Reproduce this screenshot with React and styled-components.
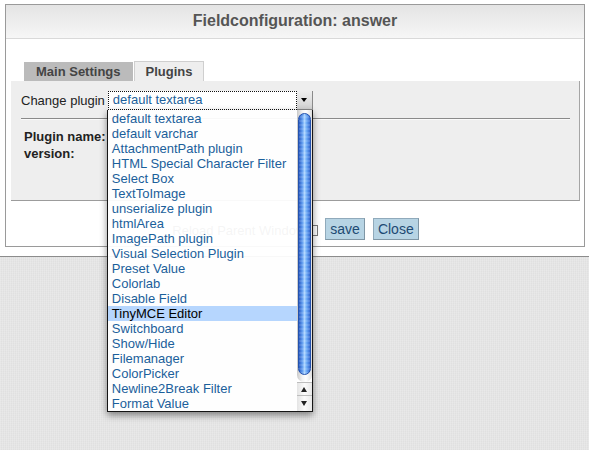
import React from 'react';
import styled, { createGlobalStyle } from 'styled-components';

const GlobalStyle = createGlobalStyle`
    html, body {
        margin: 0;
        padding: 0;
    }
    body {
        font-family: "Liberation Sans", Arial, sans-serif;
        background: #e4e4e4;
    }
    * {
        box-sizing: border-box;
    }
`

const Page = styled.div`
    width: 589px;
    height: 450px;
    display: flex;
    flex-direction: column;
    overflow: hidden;
`

const TopArea = styled.div`
    height: 257px;
    background: #fff;
    border-bottom: 1px solid #8c8c8c;
    padding: 4px 4px 0 5px;
    flex-shrink: 0;
`

const Bottom = styled.div`
    flex: 1;
    background-color: #e4e4e4;
    background-image:
        repeating-linear-gradient(90deg, rgba(255,255,255,0.18) 0 1px, transparent 1px 2px),
        repeating-linear-gradient(0deg, rgba(0,0,0,0.015) 0 1px, transparent 1px 2px);
`

const Window = styled.div`
    height: 243px;
    border: 1px solid #9a9a9a;
    display: flex;
    flex-direction: column;
`

const Header = styled.div`
    height: 34px;
    border-bottom: 1px solid #d9d9d9;
    background: linear-gradient(#e4e4e4, #f6f6f6);
    display: flex;
    align-items: center;
    justify-content: center;
    padding-bottom: 1px;
`

const Title = styled.h1`
    margin: 0;
    font-size: 16px;
    font-weight: bold;
    color: #555;
`

const Body = styled.div`
    flex: 1;
    padding: 22px 4px 0 5px;
    display: flex;
    flex-direction: column;
`

const Tabs = styled.div`
    display: flex;
    align-items: flex-end;
    padding-left: 13px;
`

const Tab = styled.div`
    height: ${p => (p.$active ? '20px' : '19px')};
    padding: 0 ${p => (p.$active ? '11px' : '12px')};
    margin-right: 1px;
    display: flex;
    align-items: center;
    font-size: 13px;
    font-weight: bold;
    color: #444;
    background: ${p => (p.$active ? '#eeeeee' : '#bbbbbb')};
    border: ${p => (p.$active ? '1px solid #cfcfcf' : 'none')};
    border-bottom: none;
`

const Panel = styled.div`
    height: 120px;
    background: #eeeeee;
    border-right: 1px solid #a5a5a5;
    border-bottom: 1px solid #9c9c9c;
    padding: 10px 0 0 10px;
    flex-shrink: 0;
`

const PluginRow = styled.div`
    display: flex;
    align-items: center;
    height: 19px;
`

const RowLabel = styled.span`
    font-size: 13px;
    color: #222;
    margin-right: 3px;
`

const SelectWrap = styled.div`
    position: relative;
    width: 205px;
    height: 19px;
    display: flex;
`

const SelectValue = styled.div`
    flex: 1;
    border: 1px dotted #111;
    background: #fff;
    font-size: 13px;
    color: #1b5f9b;
    padding-left: 4px;
    line-height: 16px;
`

const SelectArrow = styled.div`
    width: 16px;
    background: linear-gradient(#eeeeee, #d2d2d2);
    border-right: 1px solid #8a8a8a;
    border-bottom: 1px solid #8a8a8a;
    display: flex;
    align-items: center;
    justify-content: center;

    &::after {
        content: '';
        border-left: 3px solid transparent;
        border-right: 3px solid transparent;
        border-top: 4px solid #000;
    }
`

const Dropdown = styled.div`
    position: absolute;
    top: 19px;
    left: -1px;
    width: 206px;
    height: 302px;
    display: flex;
    border: 1px solid #151515;
    border-top: none;
    background: rgba(255, 255, 255, 0.94);
    box-shadow: 0 3px 7px rgba(0, 0, 0, 0.45);
    z-index: 5;
`

const Options = styled.ul`
    flex: 1;
    list-style: none;
    margin: 0;
    padding: 1px 0 0;
`

const Option = styled.li`
    height: 15px;
    line-height: 15px;
    font-size: 13px;
    padding-left: 4px;
    white-space: nowrap;
    color: ${p => (p.$selected ? '#000' : '#1b5f9b')};
    background: ${p => (p.$selected ? '#b6d6fe' : 'transparent')};
`

const Scrollbar = styled.div`
    width: 15px;
    display: flex;
    flex-direction: column;
    background: #fff;
`

const Track = styled.div`
    flex: 1;
    padding: 3px 1px 7px 1px;
    background: linear-gradient(90deg, #c9c9c9, #f3f3f3 35%, #ffffff 60%, #dedede);
    border-radius: 0 0 7px 7px;
`

const Thumb = styled.div`
    height: 100%;
    border-radius: 7px;
    border: 1px solid #2452ad;
    background:
        repeating-linear-gradient(0deg, rgba(255,255,255,0.12) 0 2px, transparent 2px 4px),
        linear-gradient(90deg, #2a5cc2, #5f9bef 30%, #a9d3ff 50%, #6aa8f5 70%, #3368d0);
`

const ArrowButton = styled.div`
    height: ${p => p.$h}px;
    border-top: 1px solid #bdbdbd;
    background: linear-gradient(90deg, #e4e4e4, #fbfbfb 50%, #e8e8e8);
    display: flex;
    align-items: center;
    justify-content: center;

    &::after {
        content: '';
        border-left: 3px solid transparent;
        border-right: 3px solid transparent;
        ${p => (p.$up ? 'border-bottom: 5px solid #222;' : 'border-top: 5px solid #222;')}
    }
`

const Rule = styled.hr`
    margin: 8px 9px 0 0;
    border: none;
    border-top: 1px solid #8a8a8a;
    border-bottom: 1px solid #fafafa;
`

const Info = styled.div`
    margin: 8px 0 0 3px;
    display: flex;
    flex-direction: column;
`

const InfoLabel = styled.span`
    font-size: 13px;
    font-weight: bold;
    line-height: 17px;
    color: #222;
`

const Footer = styled.div`
    flex: 1;
    display: flex;
    justify-content: center;
    align-items: flex-start;
    padding-top: 17px;
`

const ReloadLabel = styled.label`
    display: flex;
    align-items: center;
    height: 22px;
    font-size: 13px;
    color: #555;
    margin-right: 7px;
    padding-top: 2px;
`

const CheckBox = styled.span`
    width: 12px;
    height: 11px;
    margin-left: 1px;
    border: 1px solid #7a7a7a;
    background: #fff;
`

const Button = styled.button`
    height: 22px;
    padding: 0 4px;
    margin-right: 8px;
    font-family: "Liberation Sans", Arial, sans-serif;
    font-size: 14px;
    color: #1d4a73;
    background: #b7d4e4;
    border: 1px solid #90aabb;
    border-right-color: #7f96a5;
    border-bottom-color: #7f96a5;

    &:last-child {
        margin-right: 0;
    }
`

const plugins = [
    'default textarea',
    'default varchar',
    'AttachmentPath plugin',
    'HTML Special Character Filter',
    'Select Box',
    'TextToImage',
    'unserialize plugin',
    'htmlArea',
    'ImagePath plugin',
    'Visual Selection Plugin',
    'Preset Value',
    'Colorlab',
    'Disable Field',
    'TinyMCE Editor',
    'Switchboard',
    'Show/Hide',
    'Filemanager',
    'ColorPicker',
    'Newline2Break Filter',
    'Format Value',
];

const App = () => {
    return (
        <Page>
            <GlobalStyle />
            <TopArea>
                <Window>
                    <Header>
                        <Title>Fieldconfiguration: answer</Title>
                    </Header>
                    <Body>
                        <Tabs>
                            <Tab>Main Settings</Tab>
                            <Tab $active>Plugins</Tab>
                        </Tabs>
                        <Panel>
                            <PluginRow>
                                <RowLabel>Change plugin</RowLabel>
                                <SelectWrap>
                                    <SelectValue>default textarea</SelectValue>
                                    <SelectArrow />
                                    <Dropdown>
                                        <Options>
                                            {plugins.map(name => (
                                                <Option key={name} $selected={name === 'TinyMCE Editor'}>
                                                    {name}
                                                </Option>
                                            ))}
                                        </Options>
                                        <Scrollbar>
                                            <Track>
                                                <Thumb />
                                            </Track>
                                            <ArrowButton $up $h={13} />
                                            <ArrowButton $h={16} />
                                        </Scrollbar>
                                    </Dropdown>
                                </SelectWrap>
                            </PluginRow>
                            <Rule />
                            <Info>
                                <InfoLabel>Plugin name:</InfoLabel>
                                <InfoLabel>version:</InfoLabel>
                            </Info>
                        </Panel>
                        <Footer>
                            <ReloadLabel>
                                Reload Parent Window
                                <CheckBox />
                            </ReloadLabel>
                            <Button>save</Button>
                            <Button>Close</Button>
                        </Footer>
                    </Body>
                </Window>
            </TopArea>
            <Bottom />
        </Page>
    )
}

export default App;
